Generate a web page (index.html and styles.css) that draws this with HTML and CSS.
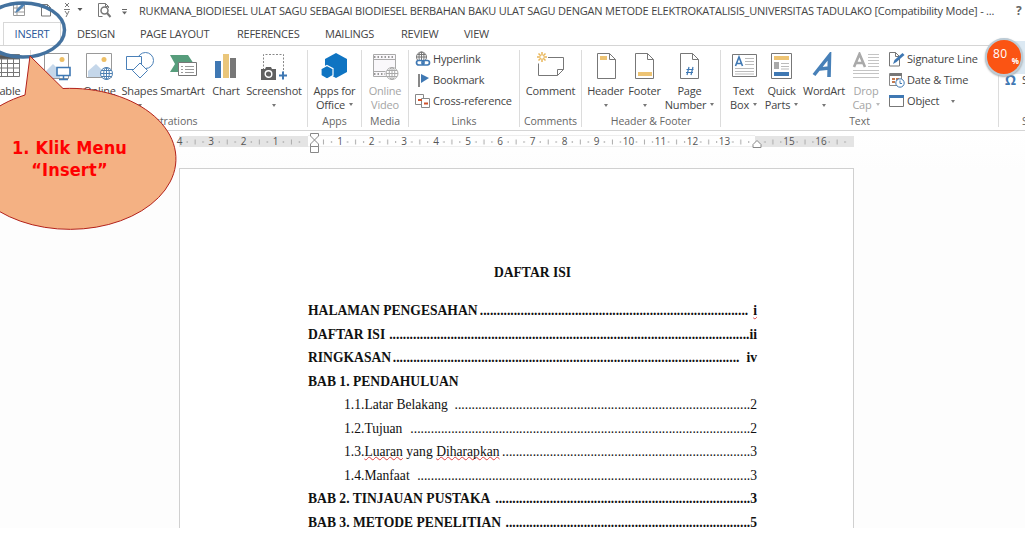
FILE: index.html
```html
<!DOCTYPE html>
<html lang="id">
<head>
<meta charset="utf-8">
<title>RUKMANA_BIODIESEL - Word</title>
<link rel="stylesheet" href="styles.css">
</head>
<body>
<div class="screen">
  <header class="titlebar">
    <svg class="quick" width="136" height="22" fill="none" stroke="#777">
      <path d="M13.500 4.500h11v11h-11zM13.500 8h11M17 4.500v11M13.500 12h11" stroke="#999"/><path d="M15 13l2-4 6-6 2 2-6 6z" fill="#4f83b5" stroke="none"/>
      <path d="M41.500 4.500h6l3 3v8.500h-9z"/><path d="M47.500 4.500v3h3"/>
      <path d="M64 9.500h6M65 3l4 4M69 3l-4 4M65 11l2 3M69 11l-3 6"/>
      <path d="M77.500 8h5l-2.500 3z" fill="#555" stroke="none"/>
      <path d="M108.500 8v-1.500l-3-3h-7v13h4"/><path d="M105.500 3.500v3h3"/><circle cx="104.500" cy="10.500" r="3.500" stroke-width="1.500"/><path d="M107 13l3.500 4" stroke-width="2"/>
      <path d="M122 9.500h5" stroke="#666"/><path d="M122 11.500h5l-2.500 3z" fill="#666" stroke="none"/>
    </svg>
    <span class="doc-title">RUKMANA_BIODIESEL ULAT SAGU SEBAGAI BIODIESEL BERBAHAN BAKU ULAT SAGU DENGAN METODE ELEKTROKATALISIS_UNIVERSITAS TADULAKO [Compatibility Mode] - ...</span>
    <span class="help">?</span>
  </header>

  <nav class="tabs">
    <span class="tab active">INSERT</span>
    <span class="tab t-design">DESIGN</span>
    <span class="tab t-layout">PAGE LAYOUT</span>
    <span class="tab t-ref">REFERENCES</span>
    <span class="tab t-mail">MAILINGS</span>
    <span class="tab t-review">REVIEW</span>
    <span class="tab t-view">VIEW</span>
  </nav>

  <section class="ribbon">
    <div class="group g-tables">
      <div class="tools">
        <div class="btn b-table"><svg width="28" height="30" fill="#fff" stroke="#777"><path d="M2.500 2.500h24v22h-24z"/><path d="M2.500 3h24v4h-24z" fill="#555"/><path d="M2.500 11.500h24M2.500 16h24M2.500 20.500h24M8.500 7v17M14.500 7v17M20.500 7v17"/></svg><span>Table</span><i class="arrow"></i></div>
      </div>
      <div class="caption"></div>
    </div>

    <div class="group g-illus">
      <div class="tools">
        <div class="btn b-pic"><svg width="28" height="30" fill="none"><path d="M1.500 1.500h24v25h-24z" fill="#fff" stroke="#999"/><circle cx="19" cy="7.500" r="2.500" fill="#eebf65"/><path d="M2 26v-6l8-8 7 7v7z" fill="#c5d7ea"/><path d="M14 15.500h13v8h-13z" fill="#fff" stroke="#3f79b4" stroke-width="1.600"/><path d="M20.500 24v3M16 27.500h9" stroke="#3f79b4" stroke-width="1.500"/></svg><span>Pictures</span></div>
        <div class="btn b-online"><svg width="28" height="30" fill="none"><path d="M.500 1.500h25v24h-25z" fill="#fff" stroke="#999"/><circle cx="18" cy="7.500" r="2.500" fill="#eebf65"/><path d="M2 25v-6l8-7 7 7v6z" fill="#c5d7ea"/><g stroke="#4d80b2"><circle cx="20.500" cy="21.500" r="6" fill="#fff"/><ellipse cx="20.500" cy="21.500" rx="2.800" ry="6"/><path d="M14.500 21.500h12M15.500 18.500h10M15.500 24.500h10M20.500 15.500v12"/></g></svg><span>Online</span><span>Pictures</span></div>
        <div class="btn b-shapes"><svg width="28" height="30" stroke="#4a80b8" fill="#fff"><circle cx="19.500" cy="8.500" r="8"/><path d="M.500 4.500h15v13h-15z"/><path d="M14 11l7.500 7.500-7.500 7.500-7.500-7.500z"/></svg><span>Shapes</span><i class="arrow"></i></div>
        <div class="btn b-smart"><svg width="28" height="30" fill="none"><path d="M1 3h18l6 9-5 8h-19l5-8z" fill="#579d7c"/><path d="M9.500 10.500h18v13h-18z" fill="#fff" stroke="#777"/><path d="M12 14.500h2M16 14.500h9M12 17.500h2M16 17.500h9M12 20.500h2M16 20.500h9" stroke="#999"/></svg><span>SmartArt</span></div>
        <div class="btn b-chart"><svg width="28" height="30"><path d="M3 9h6v17H3z" fill="#3f78b3"/><path d="M11 2h6v24h-6z" fill="#eac67a"/><path d="M18 6h6v20h-6z" fill="#777"/></svg><span>Chart</span></div>
        <div class="btn b-shot"><svg width="28" height="30" fill="none"><path d="M3.500 18v-15.500h20v18" stroke="#888" stroke-dasharray="2 1.500"/><path d="M1 17h4l1-2h5l1 2h4v11H1z" fill="#606060"/><circle cx="8.500" cy="22" r="3.300" stroke="#fff" stroke-width="1.400"/><path d="M23 19.500v8M19 23.500h8" stroke="#3f78b3" stroke-width="2"/></svg><span>Screenshot</span><i class="arrow"></i></div>
      </div>
      <div class="caption">Illustrations</div>
    </div>

    <div class="group g-apps">
      <div class="tools">
        <div class="btn b-full"><svg width="28" height="30" fill="#0f74c2"><path d="M15 1l11 6v13l-11 6-11-6V7z"/><path d="M6 13.500l6 3.200v6.800l-6 3.500-6-3.500v-6.800z" stroke="#fff" stroke-width="1.200"/></svg><span>Apps for</span><span>Office<i class="arrow in"></i></span></div>
      </div>
      <div class="caption">Apps</div>
    </div>

    <div class="group g-media">
      <div class="tools">
        <div class="btn b-full dim"><svg width="28" height="30" fill="none" stroke="#aaa"><path d="M2.500 2.500h22v22h-22z" fill="#faf8fb"/><path d="M3 5h21M3 22h11" stroke="#999" stroke-width="2" stroke-dasharray="1.500 2"/><path d="M2.500 7.500h22M2.500 19.500h12" /><circle cx="21" cy="21.500" r="6" fill="#fff"/><ellipse cx="21" cy="21.500" rx="2.800" ry="6"/><path d="M15 21.500h12M16 18.500h10M16 24.500h10M21 15.500v12"/></svg><span>Online</span><span>Video</span></div>
      </div>
      <div class="caption">Media</div>
    </div>

    <div class="group g-links">
      <div class="rows">
        <div class="row"><svg width="16" height="16" fill="none"><g stroke="#777"><circle cx="6.500" cy="6" r="5"/><path d="M1.500 6h10M6.500 1v10M2.500 3.500h8"/><ellipse cx="6.500" cy="6" rx="2.500" ry="5"/></g><rect x="1.500" y="9.500" width="7.500" height="4.500" rx="2.200" stroke="#3f78b3" stroke-width="1.700" fill="#fff"/><rect x="7" y="9.500" width="7.500" height="4.500" rx="2.200" stroke="#3f78b3" stroke-width="1.700"/></svg><span>Hyperlink</span></div>
        <div class="row"><svg width="16" height="16"><path d="M3 2h2v13H3z" fill="#888"/><path d="M6 2l8 4-8 5z" fill="#3f78b3"/></svg><span>Bookmark</span></div>
        <div class="row"><svg width="16" height="16" fill="#fff" stroke="#888"><path d="M.500 1.500h8v10h-8z"/><path d="M6.500 5.500h8v9h-8z"/><path d="M3 7h4M9 10.500h4" stroke="#d0532d" stroke-width="2"/></svg><span>Cross-reference</span></div>
      </div>
      <div class="caption">Links</div>
    </div>

    <div class="group g-comments">
      <div class="tools">
        <div class="btn b-full"><svg width="28" height="30" fill="none"><path d="M11 5.500h15.500v12l-6 6h-19v-12" stroke="#777"/><path d="M20.500 23.500v-6h6" stroke="#777"/><path d="M5 0v10M0 5h10M1.500 1.500l7 7M8.500 1.500l-7 7" stroke="#e9b75b" stroke-width="1.500"/><circle cx="5" cy="5" r="1.700" fill="#fff"/></svg><span>Comment</span></div>
      </div>
      <div class="caption">Comments</div>
    </div>

    <div class="group g-hf">
      <div class="tools">
        <div class="btn b-header"><svg width="28" height="30" fill="#fff" stroke="#777"><path d="M5.500 1.500h12l6 6v19h-18z"/><path d="M17.500 1.500v6h6" fill="none"/><path d="M8 4h7v4H8z" fill="#edc373" stroke="none"/></svg><span>Header</span><i class="arrow"></i></div>
        <div class="btn b-footer"><svg width="28" height="30" fill="#fff" stroke="#777"><path d="M4.500 1.500h12l6 6v19h-18z"/><path d="M16.500 1.500v6h6" fill="none"/><path d="M7 20h14v4H7z" fill="#edc373" stroke="none"/></svg><span>Footer</span><i class="arrow"></i></div>
        <div class="btn b-page"><svg width="28" height="30" fill="#fff" stroke="#777"><path d="M4.500 1.500h12l6 6v19h-18z"/><path d="M16.500 1.500v6h6" fill="none"/><path d="M13 15l-2 8M17 15l-2 8M10.500 17.500h7M10 20.500h7" stroke="#3f78b3" stroke-width="1.200"/></svg><span>Page</span><span>Number<i class="arrow in"></i></span></div>
      </div>
      <div class="caption">Header &amp; Footer</div>
    </div>

    <div class="group g-text">
      <div class="text-body">
        <div class="tools">
          <div class="btn b-tbox"><svg width="28" height="30" fill="none"><path d="M2.500 2.500h24v22h-24z" fill="#fff" stroke="#777"/><path d="M5.500 14l3.500-9 3.500 9M7 11.500h4" stroke="#3f78b3" stroke-width="1.600"/><path d="M15 6.500h9M15 9.500h9M15 12.500h9M5 16.500h19M5 19.500h19M5 22h19" stroke="#bbb"/></svg><span>Text</span><span>Box<i class="arrow in"></i></span></div>
          <div class="btn b-quick"><svg width="28" height="30"><path d="M3.500 1.500h20v25h-20z" fill="#fff" stroke="#777"/><path d="M6 4h15v4H6z" fill="#edc373"/><path d="M6 10h5v7H6z" fill="#aaa"/><path d="M13 11.500h8M13 14.500h8M13 17h8" stroke="#bbb"/><path d="M6 20h15v4H6z" fill="#3f78b3"/></svg><span>Quick</span><span>Parts<i class="arrow in"></i></span></div>
          <div class="btn b-wa"><svg width="28" height="30"><path d="M4 23L19.500 3.500 19 25M9.500 17l10-1" fill="none" stroke="#4780b8" stroke-width="3.600"/></svg><span>WordArt</span><i class="arrow"></i></div>
          <div class="btn b-drop dim"><svg width="28" height="30" fill="none"><path d="M2 15L7.500 2 13 15M4 11h7" stroke="#aaa" stroke-width="2.600"/><path d="M16 2.500h11M16 5.500h11M16 8.500h11M16 11.500h11M16 14.500h11M1 18.500h26M1 21.500h26M1 25.500h26" stroke="#c4c4c4"/></svg><span>Drop</span><span>Cap<i class="arrow in"></i></span></div>
        </div>
        <div class="rows">
          <div class="row"><svg width="16" height="16" fill="none"><path d="M.500 1.500h6l4 4v9.500h-10z" fill="#fff" stroke="#777"/><path d="M6.500 1.500v4h4" stroke="#777"/><path d="M4 13l1.500-4 8-7 2 2-8 7z" fill="#3f78b3"/></svg><span>Signature Line</span></div>
          <div class="row"><svg width="16" height="16" fill="#fff"><path d="M.500 1.500h12v12h-12z" stroke="#888"/><path d="M1 1h12v3H1z" fill="#777"/><path d="M3 6h3v2H3zM7 6h3v2H7zM3 9h3v2H3z" fill="#c47a50"/><circle cx="11" cy="11" r="4.200" stroke="#3f78b3"/><path d="M11 8.500v3h2" stroke="#3f78b3" fill="none"/></svg><span>Date &amp; Time</span></div>
          <div class="row"><svg width="16" height="16"><path d="M.500 2.500h14v11h-14z" fill="#fff" stroke="#777"/><path d="M0 2h15v3H0z" fill="#3f78b3"/></svg><span>Object</span><i class="arrow side"></i></div>
        </div>
      </div>
      <div class="caption">Text</div>
    </div>

    <div class="group g-symbols">
      <div class="rows">
        <div class="row"></div>
        <div class="row"><b class="omega">Ω</b><span>Symbol</span></div>
        <div class="row"></div>
      </div>
      <div class="caption">Symbols</div>
    </div>
  </section>

  <main class="workspace">
    <svg class="ruler" width="676" height="26">
      <defs><pattern id="ticks" x="129.500" y="0" width="32.100" height="13" patternUnits="userSpaceOnUse"><path d="M8 6v2M24 6v2M16 4.500v5" stroke="#aaa"/></pattern></defs>
      <path d="M1 1h129v11H1zM577 1h99v11h-99z" fill="#e4e4e4"/>
      <path d="M130 .500h447M130 11.500h447" stroke="#eee"/>
      <path d="M6 0h665v13H6z" fill="url(#ticks)"/>
      <g class="numbers">
        <text x="1.500" y="9.500">4</text><text x="33" y="9.500">3</text><text x="65.500" y="9.500">2</text><text x="97.500" y="9.500">1</text>
        <text x="162" y="9.500">1</text><text x="193.500" y="9.500">2</text><text x="226" y="9.500">3</text><text x="258" y="9.500">4</text><text x="290" y="9.500">5</text><text x="322" y="9.500">6</text><text x="354.500" y="9.500">7</text><text x="386.500" y="9.500">8</text><text x="418.500" y="9.500">9</text><text x="450.500" y="9.500">10</text><text x="482.500" y="9.500">11</text><text x="514.500" y="9.500">12</text><text x="546.500" y="9.500">13</text><text x="611" y="9.500">15</text><text x="643" y="9.500">16</text>
      </g>
      <path d="M132.500 -1.500h8v2.500l-4 4-4-4zM132.500 11.500v-2.500l4-4 4 4v2.500zM132.500 11.500h8v6h-8z" fill="#fff" stroke="#888"/>
      <path d="M575 12.500v-3l4-4 4 4v3z" fill="#fff" stroke="#888"/>
    </svg>

    <article class="page">
      <h1>DAFTAR ISI</h1>
      <div class="toc bold"><span>HALAMAN PENGESAHAN</span><span>...............................................................................<b class="gap1 err">i</b></span></div>
      <div class="toc bold"><span>DAFTAR ISI</span><span>..........................................................................................................<b>ii</b></span></div>
      <div class="toc bold"><span>RINGKASAN</span><span>......................................................................................................<b class="gap2">iv</b></span></div>
      <div class="toc bold"><span>BAB 1. PENDAHULUAN</span></div>
      <div class="toc sub"><span>1.1.Latar Belakang</span><span>.......................................................................................2</span></div>
      <div class="toc sub"><span>1.2.Tujuan</span><span>....................................................................................................2</span></div>
      <div class="toc sub"><span>1.3.<u class="err">Luaran</u> yang <u class="err">Diharapkan</u></span><span>.........................................................................3</span></div>
      <div class="toc sub"><span>1.4.Manfaat</span><span>..................................................................................................3</span></div>
      <div class="toc bold"><span>BAB 2. TINJAUAN PUSTAKA</span><span>...........................................................................3</span></div>
      <div class="toc bold"><span>BAB 3. METODE PENELITIAN</span><span>........................................................................5</span></div>
    </article>
  </main>

  <svg class="overlay" width="200" height="240">
    <ellipse cx="23" cy="30" rx="41.500" ry="27" fill="none" stroke="#44729f" stroke-width="3.500"/>
    <path d="M30 56L63 88.500A106 70.500 0 1 1 25 95Z" fill="#f4b183" stroke="#b3211a"/>
  </svg>
  <div class="callout">1. Klik Menu<br>“Insert”</div>
  <div class="glow"></div>
  <div class="badge"><span class="num">80</span><span class="pct">%</span></div>
</div>
</body>
</html>
```
FILE: styles.css
```css
body { margin: 0; background: #fff; }
.screen {
  position: relative; width: 1025px; height: 538px; overflow: hidden;
  display: flex; flex-direction: column; background: #fff;
  font: 12px/14px "Open Sans", "Noto Sans", sans-serif; color: #444;
}
svg { display: block; flex: none; }
span { white-space: nowrap; }

.titlebar { display: flex; height: 22px; align-items: center; }
.doc-title { width: 856px; margin-left: 3px; font-size: 11px; letter-spacing: -0.21px; }
.help { margin-left: 21px; font-weight: 700; font-size: 12px; color: #666; }

.tabs { display: flex; height: 23px; font-size: 11px; line-height: 24px; letter-spacing: -0.25px; }
.tab { flex: none; }
.active { width: 58px; margin-left: 3px; border: 1px solid #d8d8d8; border-bottom: 0; box-sizing: border-box; text-align: center; color: #2b579a; line-height: 22px; }
.t-design { width: 63px; margin-left: 16px; }
.t-layout { width: 97px; }
.t-ref { width: 88px; }
.t-mail { width: 76px; }
.t-review { width: 63px; }

.ribbon { display: flex; flex: none; height: 86px; box-sizing: border-box; border-top: 1px solid #d5d5d5; border-bottom: 1px solid #d5d5d5; overflow: hidden; font-size: 11px; letter-spacing: -0.18px; }
.group { flex: none; display: flex; flex-direction: column; justify-content: space-between; box-sizing: border-box; margin: 4px 0 3px; border-right: 1px solid #dcdcdc; }
.g-tables { width: 31px; }
.g-illus { width: 277px; }
.g-apps { width: 54px; }
.g-media { width: 47px; }
.g-links { width: 111px; }
.g-comments { width: 62px; }
.g-hf { width: 139px; }
.g-text { width: 278px; }
.g-symbols { width: 80px; border: 0; }
.caption { height: 11px; line-height: 11px; font-size: 10.5px; letter-spacing: -0.05px; text-align: center; color: #666; }
.g-symbols .caption { padding-left: 23px; text-align: left; }

.tools { display: flex; }
.btn { flex: none; display: flex; flex-direction: column; align-items: center; padding-top: 2px; }
.btn svg { margin-bottom: 2px; }
.btn span { line-height: 14px; }
.dim { color: #a5a5a5; }
.arrow { width: 0; height: 0; border: 2.5px solid transparent; border-top: 3px solid #777; border-bottom: 0; margin-top: 6px; }
.arrow.in { display: inline-block; margin: 0 0 3px 4px; }
.arrow.side { margin: 0 0 0 10px; }
.dim .arrow { border-top-color: #bbb; }
.b-table { width: 44px; margin-left: -15px; }
.b-pic { width: 42px; margin-left: 5px; }
.b-online { width: 43px; }
.b-shapes { width: 37px; }
.b-smart { width: 49px; }
.b-chart { width: 38px; }
.b-shot { width: 58px; }
.b-full { width: 100%; }
.b-header { width: 39px; margin-left: 4px; }
.b-footer { width: 39px; }
.b-page { width: 51px; }
.b-tbox { width: 37px; margin-left: 4px; }
.b-quick { width: 39px; }
.b-wa { width: 46px; }
.b-drop { width: 38px; }
.text-body { display: flex; gap: 4px; }
.rows { display: flex; flex-direction: column; margin-top: -1.5px; }
.g-links .rows { padding-left: 6px; }
.g-symbols .rows { padding-left: 6px; }
.row { display: flex; align-items: center; height: 21px; gap: 2px; }
.omega { width: 15px; font-size: 14px; color: #3f78b3; }

.workspace { flex: none; height: 397px; background: linear-gradient(#fff, #fdfdfd 38px); }
.ruler { margin: 4px 0 7px 178px; overflow: visible; }
.numbers { font: 10px "Open Sans", sans-serif; fill: #555; text-anchor: middle; }
.page {
  box-sizing: border-box; width: 675px; height: 360px; margin-left: 179px; padding: 92px 96px 0 128px;
  background: #fff; border: 1px solid #d0d0d0; border-bottom: 0; overflow: hidden;
  font: 13.6px/23.45px "Liberation Serif", serif; color: #111;
}
.page h1 { margin: 0 0 15px; font-size: 13.6px; line-height: 23.45px; text-align: center; }
.toc { display: flex; justify-content: space-between; }
.sub { padding-left: 36px; }
.bold { font-weight: 700; }
.gap1 { margin-left: 5px; }
.gap2 { margin-left: 7px; }
.err { text-decoration: underline wavy #e04040 1px; text-underline-offset: 0; text-decoration-skip-ink: none; }

.overlay { position: absolute; left: 0; top: 0; }
.callout { position: absolute; left: 0; top: 137px; width: 139px; text-align: center; color: #f00; font: bold 18px/22px "DejaVu Sans Condensed", "DejaVu Sans", sans-serif; letter-spacing: 0.15px; }
.glow { position: absolute; right: 0; top: 41px; width: 20px; height: 33px; background: #dce9f3; }
.badge { position: absolute; left: 985px; top: 38px; width: 34px; height: 34px; border: 2px solid #bccbd5; border-radius: 50%; background: #fb5413; color: #fff; display: flex; box-shadow: 0 1px 2px #aaa; }
.num { margin: 6px 0 0 6px; font: 12px/15px "Open Sans", sans-serif; letter-spacing: 0.5px; }
.pct { margin: 15px 0 0 4px; font: bold 8px/11px "Open Sans", sans-serif; }
```
